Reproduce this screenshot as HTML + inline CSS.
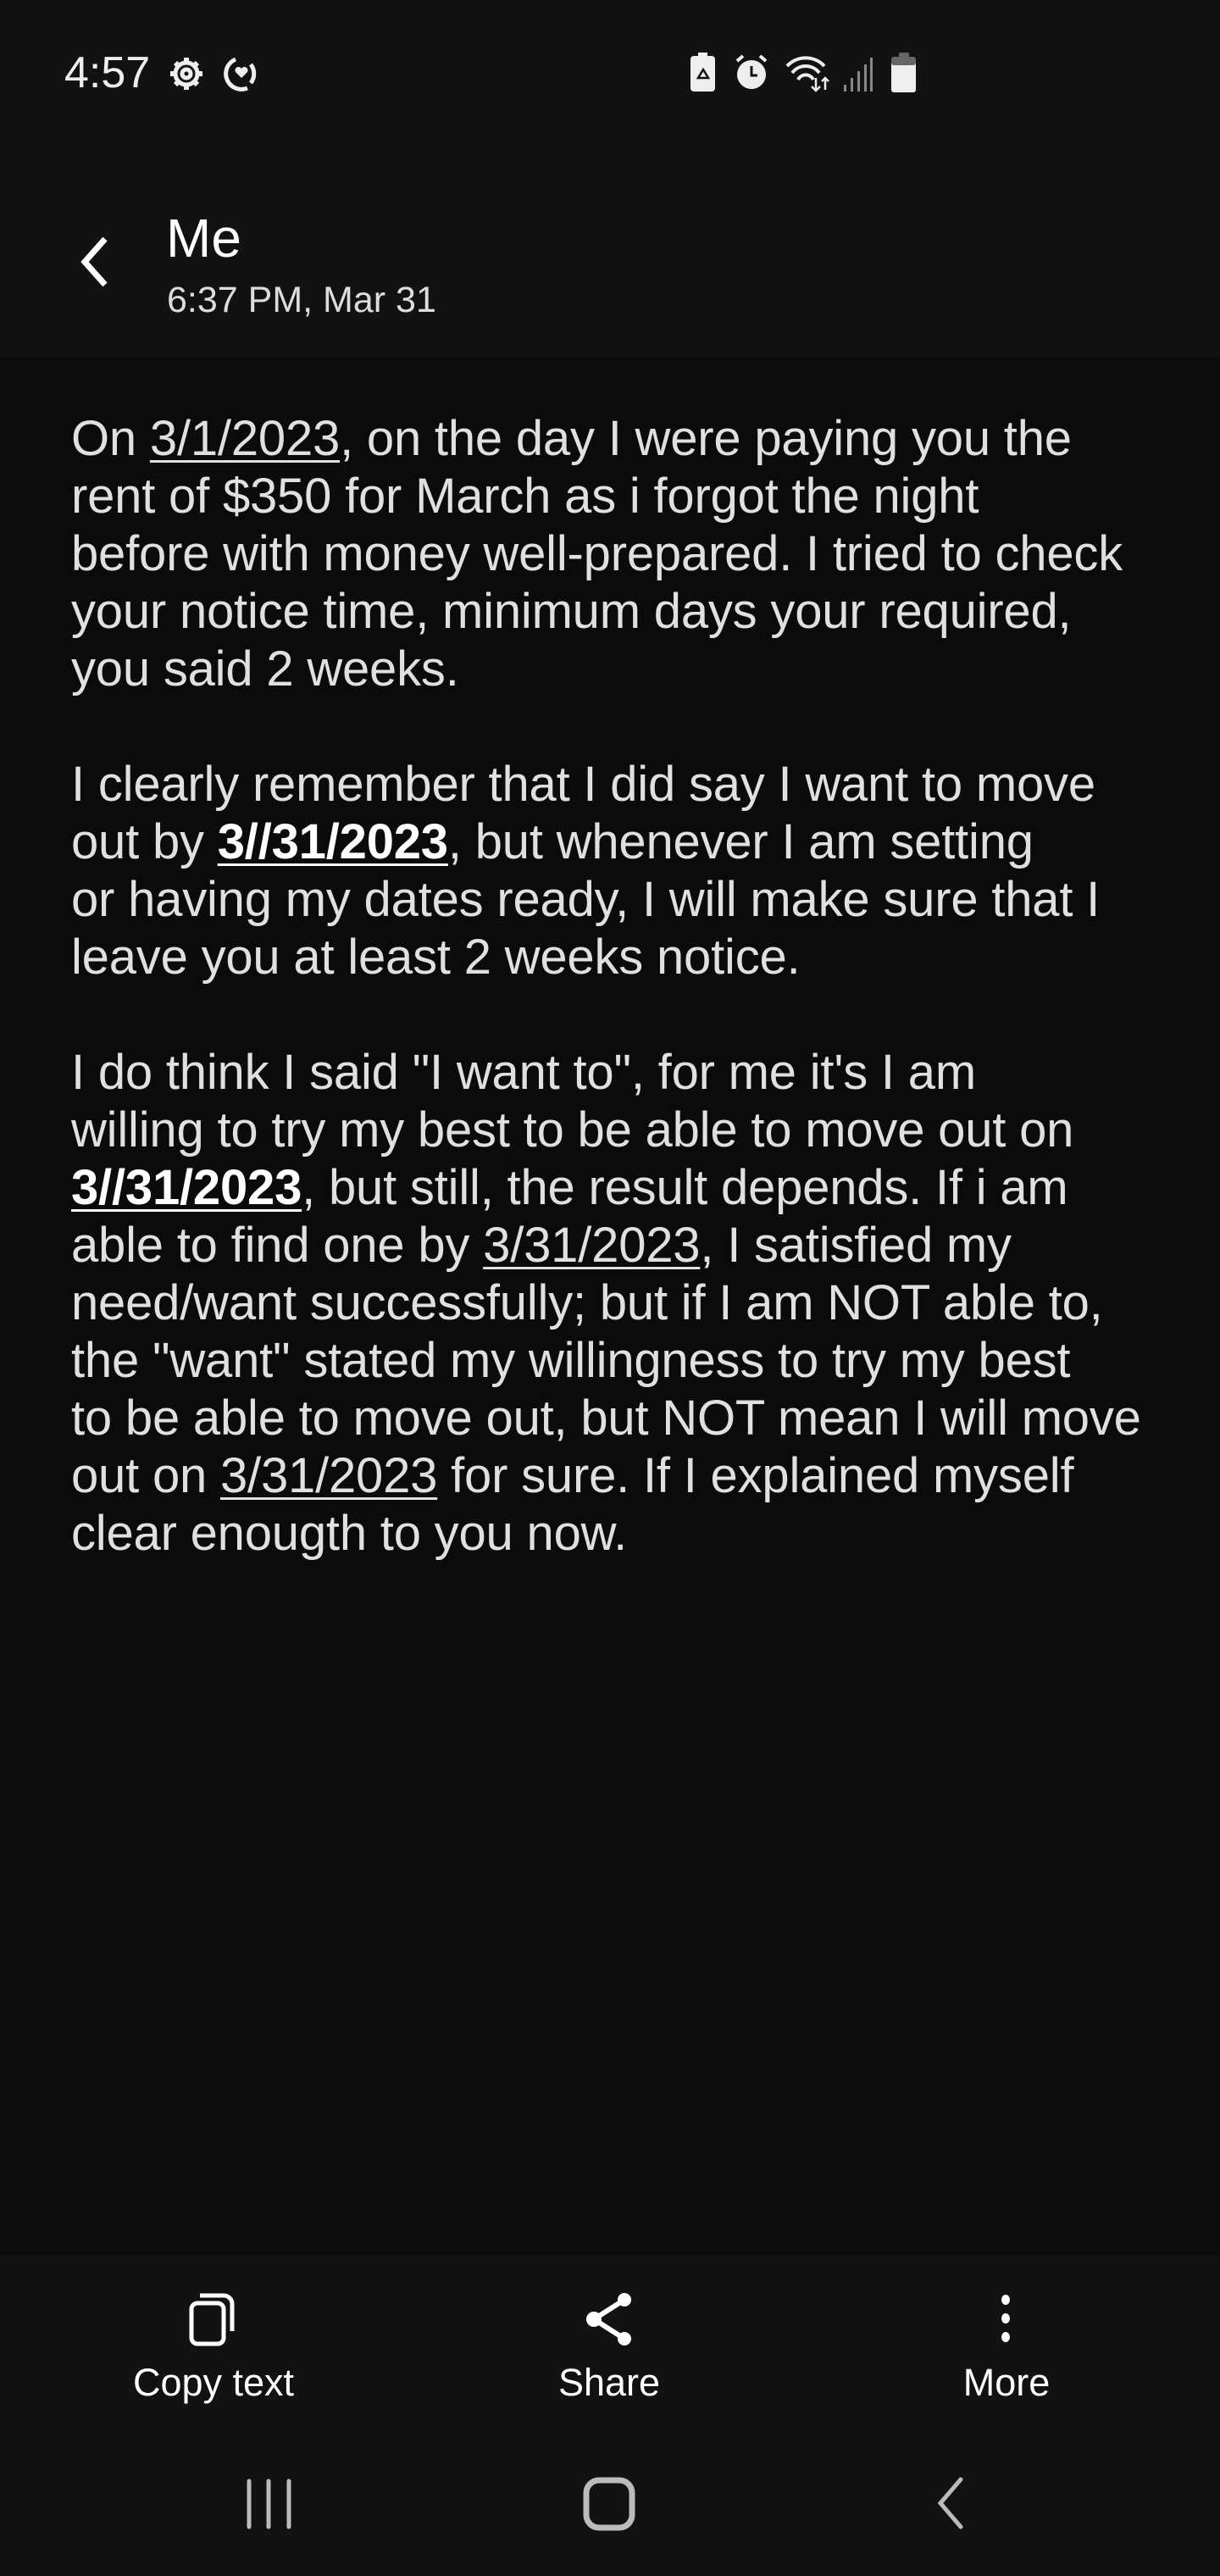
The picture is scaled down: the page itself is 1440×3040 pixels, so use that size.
<!DOCTYPE html>
<html><head><meta charset="utf-8"><style>
*{margin:0;padding:0;box-sizing:border-box}
body{width:1440px;height:3040px;background:#0b0b0b;font-family:"Liberation Sans",Roboto,sans-serif;color:#e2e2e2;position:relative;overflow:hidden}
.hdr{position:absolute;left:0;top:0;width:1440px;height:422px;background:#121212}
.time{position:absolute;left:76px;top:56px;font-size:52px;color:#eee}
.me{position:absolute;left:196px;top:244px;font-size:64px;color:#fff}
.date{position:absolute;left:197px;top:330px;font-size:43px;color:#ddd}
.msg{position:absolute;left:84px;top:484px;font-size:58px;line-height:68px;white-space:nowrap;color:#e0e0e0;letter-spacing:-0.2px}
.msg u{text-decoration-thickness:3px;text-underline-offset:6px}
.msg b{color:#fff;font-weight:bold}
.bar{position:absolute;left:0;top:2662px;width:1440px;height:378px;background:#121212}
.lbl{position:absolute;top:2786px;font-size:45px;color:#fff;transform:translateX(-50%)}
</style></head><body>
<div class="hdr"></div>
<div class="time">4:57</div>
<svg style="position:absolute;left:196px;top:64px" width="120" height="46" viewBox="0 0 120 46">
<g fill="none" stroke="#eee" stroke-width="5"><circle cx="24" cy="23" r="13"/><circle cx="24" cy="23" r="5"/>
<g stroke-width="6"><line x1="24" y1="4" x2="24" y2="10"/><line x1="24" y1="36" x2="24" y2="42"/><line x1="5" y1="23" x2="11" y2="23"/><line x1="37" y1="23" x2="43" y2="23"/><line x1="11" y1="10" x2="15" y2="14"/><line x1="33" y1="32" x2="37" y2="36"/><line x1="37" y1="10" x2="33" y2="14"/><line x1="15" y1="32" x2="11" y2="36"/></g>
<path d="M82 6 A18 18 0 1 0 96 40"/><path d="M100 12 A18 18 0 0 1 100 34"/></g>
<path d="M89 28 l-7-7 a4 4 0 0 1 7-4 a4 4 0 0 1 7 4z" fill="#eee"/></svg>
<svg style="position:absolute;left:812px;top:62px" width="272" height="48" viewBox="0 0 272 48">
<rect x="3" y="4" width="29" height="42" rx="4" fill="#eee"/><rect x="12" y="0" width="11" height="6" fill="#eee"/>
<path d="M12 30 l6-10 6 10z" fill="none" stroke="#121212" stroke-width="2.5"/>
<circle cx="75" cy="26" r="17" fill="#eee"/><path d="M75 16v11h7" stroke="#121212" stroke-width="3" fill="none"/><path d="M58 10l7-6M92 10l-7-6" stroke="#eee" stroke-width="4"/>
<g fill="none" stroke="#eee" stroke-width="4"><path d="M117 16a30 30 0 0 1 44 0"/><path d="M123 24a20 20 0 0 1 32 0"/><path d="M130 32a10 10 0 0 1 18 0"/></g>
<path d="M151 30v14M146 40l5 5 5-5M162 44v-14M158 34l4-4 4 4" stroke="#eee" stroke-width="2.5" fill="none"/>
<g fill="#888"><rect x="184" y="38" width="3" height="8"/><rect x="192" y="30" width="3" height="16"/><rect x="200" y="22" width="3" height="24"/><rect x="208" y="14" width="3" height="32"/><rect x="215" y="6" width="3" height="40"/></g>
<rect x="249" y="0" width="12" height="8" rx="2" fill="#666"/><rect x="240" y="10" width="29" height="37" rx="3" fill="#eee"/><rect x="240" y="5" width="29" height="10" rx="3" fill="#666"/>
</svg>
<svg style="position:absolute;left:88px;top:276px" width="44" height="66"><path d="M36 6 L12 33 L36 60" fill="none" stroke="#fff" stroke-width="7"/></svg>
<div class="me">Me</div>
<div class="date">6:37 PM, Mar 31</div>
<div class="msg">On <u>3/1/2023</u>, on the day I were paying you the<br>rent of $350 for March as i forgot the night<br>before with money well-prepared. I tried to check<br>your notice time, minimum days your required,<br>you said 2 weeks.<br><br>I clearly remember that I did say I want to move<br>out by <b><u>3//31/2023</u></b>, but whenever I am setting<br>or having my dates ready, I will make sure that I<br>leave you at least 2 weeks notice.<br><br>I do think I said "I want to", for me it's I am<br>willing to try my best to be able to move out on<br><b><u>3//31/2023</u></b>, but still, the result depends. If i am<br>able to find one by <u>3/31/2023</u>, I satisfied my<br>need/want successfully; but if I am NOT able to,<br>the "want" stated my willingness to try my best<br>to be able to move out, but NOT mean I will move<br>out on <u>3/31/2023</u> for sure. If I explained myself<br>clear enougth to you now.</div>
<div class="bar"></div>
<svg style="position:absolute;left:222px;top:2704px" width="60" height="66"><rect x="4" y="14" width="38" height="48" rx="7" fill="none" stroke="#fff" stroke-width="5"/><path d="M14 5h28a10 10 0 0 1 10 10v32" fill="none" stroke="#fff" stroke-width="5"/></svg>
<svg style="position:absolute;left:688px;top:2704px" width="64" height="66"><g fill="#fff"><circle cx="49" cy="10" r="8"/><circle cx="13" cy="33" r="9"/><circle cx="49" cy="56" r="8"/></g><path d="M49 10L13 33L49 56" stroke="#fff" stroke-width="6" fill="none"/></svg>
<svg style="position:absolute;left:1174px;top:2706px" width="26" height="62"><g fill="#fff"><ellipse cx="13" cy="8" rx="5" ry="6"/><ellipse cx="13" cy="30" rx="5" ry="6"/><ellipse cx="13" cy="52" rx="5" ry="6"/></g></svg>
<div class="lbl" style="left:252px">Copy text</div>
<div class="lbl" style="left:719px">Share</div>
<div class="lbl" style="left:1188px">More</div>
<svg style="position:absolute;left:288px;top:2924px" width="60" height="62"><g stroke="#bbb" stroke-width="5" stroke-linecap="round"><line x1="6" y1="4" x2="6" y2="58"/><line x1="29" y1="4" x2="29" y2="58"/><line x1="53" y1="4" x2="53" y2="58"/></g></svg>
<svg style="position:absolute;left:686px;top:2922px" width="66" height="66"><rect x="6" y="5" width="54" height="56" rx="15" fill="none" stroke="#bbb" stroke-width="7"/></svg>
<svg style="position:absolute;left:1100px;top:2922px" width="44" height="64"><path d="M34 4L10 32L34 60" fill="none" stroke="#bbb" stroke-width="5" stroke-linecap="round"/></svg>
</body></html>
